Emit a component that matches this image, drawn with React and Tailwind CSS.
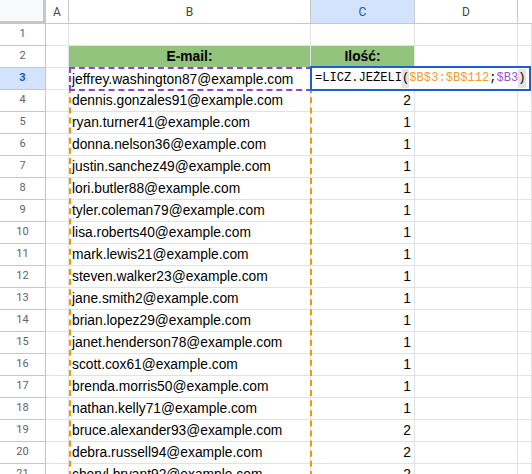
import React from "react";

const emails = [
  "jeffrey.washington87@example.com",
  "dennis.gonzales91@example.com",
  "ryan.turner41@example.com",
  "donna.nelson36@example.com",
  "justin.sanchez49@example.com",
  "lori.butler88@example.com",
  "tyler.coleman79@example.com",
  "lisa.roberts40@example.com",
  "mark.lewis21@example.com",
  "steven.walker23@example.com",
  "jane.smith2@example.com",
  "brian.lopez29@example.com",
  "janet.henderson78@example.com",
  "scott.cox61@example.com",
  "brenda.morris50@example.com",
  "nathan.kelly71@example.com",
  "bruce.alexander93@example.com",
  "debra.russell94@example.com",
  "cheryl.bryant92@example.com",
];
const counts = [null, 2, 1, 1, 1, 1, 1, 1, 1, 1, 1, 1, 1, 1, 1, 1, 2, 2, 2];

const grid = "grid grid-cols-[46px_23px_242px_104px_103px_1fr]";
const cell = "h-[22px] border-r border-b border-[#e2e2e3]";
const rowHead =
  "h-[22px] border-r border-b border-[#c7c7c7] flex items-center justify-center text-[11px] text-[#5f6368] font-['Roboto',sans-serif]";

export default function App() {
  return (
    <div className="relative w-[532px] h-[474px] overflow-hidden bg-white font-['Liberation_Sans',Arial,sans-serif] text-[13.8px] text-black">
      {/* column headers */}
      <div className={grid}>
        <div className="h-[24px] bg-[#f8f9fa] border-r-[3px] border-b-[3px] border-[#c4c7c5]" />
        <div className="h-[24px] border-r border-b border-[#c7c7c7] flex items-center justify-center text-[12px] text-[#444746] font-['Roboto',sans-serif]">A</div>
        <div className="h-[24px] border-r border-b border-[#c7c7c7] flex items-center justify-center text-[12px] text-[#444746] font-['Roboto',sans-serif]">B</div>
        <div className="h-[24px] border-r border-b border-[#c7c7c7] bg-[#d3e3fd] flex items-center justify-center text-[12px] text-[#0b57d0] font-['Roboto',sans-serif]">C</div>
        <div className="h-[24px] border-r border-b border-[#c7c7c7] flex items-center justify-center text-[12px] text-[#444746] font-['Roboto',sans-serif]">D</div>
        <div className="h-[24px] border-b border-[#c7c7c7]" />
      </div>

      {/* row 1 */}
      <div className={grid}>
        <div className={rowHead}>1</div>
        <div className={cell} />
        <div className={cell} />
        <div className={cell} />
        <div className={cell} />
        <div className={cell} />
      </div>

      {/* row 2 */}
      <div className={grid}>
        <div className={rowHead}>2</div>
        <div className={cell} />
        <div className="h-[22px] border-r border-b border-[#e2e2e3] bg-[#93c47d] flex items-end justify-center pb-[1px] font-bold leading-[18px]">E-mail:</div>
        <div className="h-[22px] border-r border-b border-[#e2e2e3] bg-[#93c47d] flex items-end justify-center pb-[1px] font-bold leading-[18px]">Ilość:</div>
        <div className={cell} />
        <div className={cell} />
      </div>

      {emails.map((e, i) => {
        const n = i + 3;
        const sel = n === 3;
        return (
          <div className={grid} key={n}>
            <div
              className={
                sel
                  ? "h-[22px] border-r border-b border-[#c7c7c7] bg-[#d3e3fd] flex items-center justify-center text-[11px] font-bold text-[#0b57d0] font-['Roboto',sans-serif]"
                  : rowHead
              }
            >
              {n}
            </div>
            <div className={cell} />
            <div className="h-[22px] border-r border-b border-[#e2e2e3] flex items-end pl-[3px] pb-[1px] leading-[18px] whitespace-nowrap overflow-hidden">
              {e}
            </div>
            <div className="h-[22px] border-r border-b border-[#e2e2e3] flex items-end justify-end pr-[3px] pb-[1px] leading-[18px]">
              {counts[i]}
            </div>
            <div className={cell} />
            <div className={cell} />
          </div>
        );
      })}

      {/* orange dashed range B3:B112 */}
      <div className="absolute left-[69px] top-[67px] w-[243px] h-[420px] border-x-2 border-dashed border-[#f29900]" />
      {/* purple dashed B3 */}
      <div className="absolute left-[69px] top-[67px] w-[243px] h-[24px] border-2 border-dashed border-[#8e44d0] bg-white flex items-end pl-[1px] pb-0 leading-[19px] whitespace-nowrap overflow-hidden">
        jeffrey.washington87@example.com
      </div>

      {/* formula editor */}
      <div className="absolute left-[310px] top-[66px] w-[221px] h-[25px] border-2 border-[#1a5fd6] bg-white flex items-center pl-[3px] font-['Liberation_Mono',monospace] text-[12.1px] whitespace-nowrap">
        <span>=LICZ.JEŻELI</span>
        <span className="bg-[#e3e3e3]">(</span>
        <span className="text-[#f29b2f]">$B$3:$B$112</span>
        <span>;</span>
        <span className="text-[#9a55c9]">$B3</span>
        <span className="bg-[#e3e3e3]">)</span>
      </div>
    </div>
  );
}
